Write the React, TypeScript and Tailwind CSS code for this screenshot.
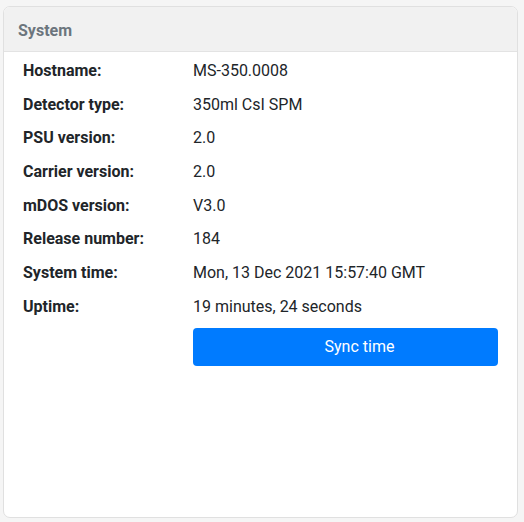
const rows: [string, string][] = [
  ['Hostname:', 'MS-350.0008'],
  ['Detector type:', '350ml CsI SPM'],
  ['PSU version:', '2.0'],
  ['Carrier version:', '2.0'],
  ['mDOS version:', 'V3.0'],
  ['Release number:', '184'],
  ['System time:', 'Mon, 13 Dec 2021 15:57:40 GMT'],
  ['Uptime:', '19 minutes, 24 seconds'],
];

export default function App() {
  return (
    <div className="w-[524px] h-[522px] bg-[#f5f5f5] pt-[6px] pl-[3px] font-['Roboto',sans-serif] text-[16px] leading-6 text-[#212529]">
      <div className="w-[515px] h-[512px] bg-white border border-[#e0e0e0] rounded-[7px] overflow-hidden flex flex-col">
        <div className="bg-[#f1f1f1] border-b border-[#e3e3e3] px-[14px] pt-[12px] pb-[8px] font-bold text-[#6c757d]">
          System
        </div>
        <div className="pl-[19px] pr-[19px] pt-[2px]">
          {rows.map(([label, value]) => (
            <div key={label} className="grid grid-cols-[170px_1fr] py-[4.85px]">
              <span className="font-bold">{label}</span>
              <span>{value}</span>
            </div>
          ))}
          <div className="grid grid-cols-[170px_1fr] mt-[4px]">
            <span />
            <button className="h-[38px] bg-[#007bff] text-white rounded-[4px] pl-[28px]">Sync time</button>
          </div>
        </div>
      </div>
    </div>
  );
}
